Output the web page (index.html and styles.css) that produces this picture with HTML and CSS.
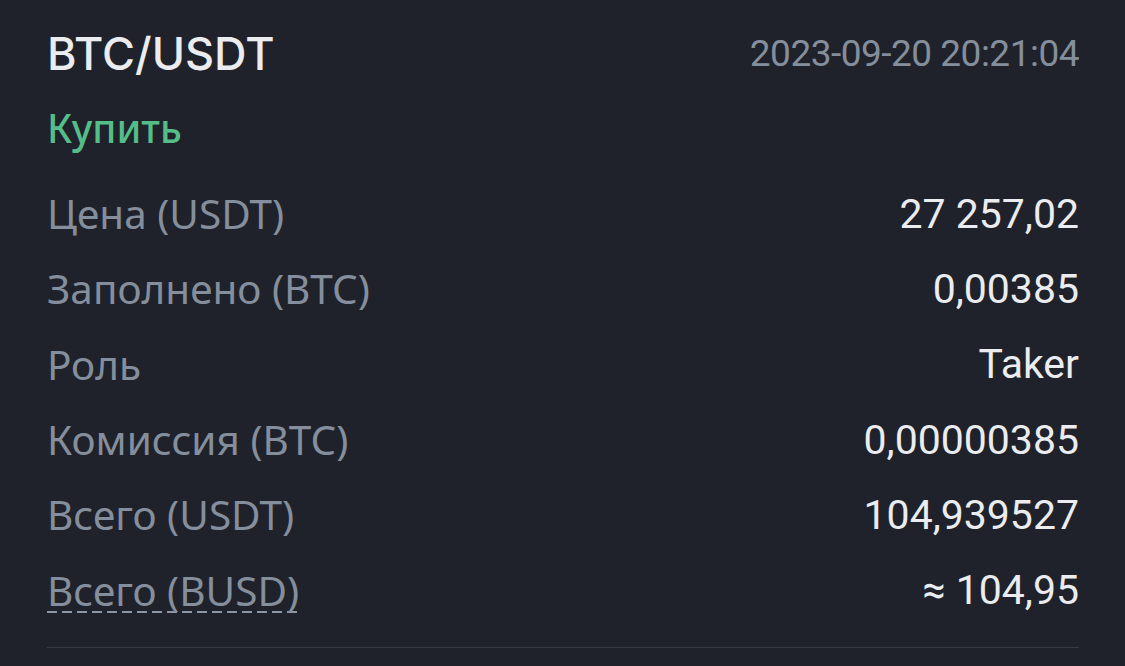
FILE: index.html
```html
<!DOCTYPE html>
<html>
<head>
    <title>BTC/USDT</title>
    <link rel="stylesheet" href="styles.css">
</head>
<body>
    <div class="trade">
        <div class="trade-head">
            <div class="pair">BTC/USDT</div>
            <div class="time">2023-09-20 20:21:04</div>
        </div>
        <div class="side">Купить</div>

        <div class="rows">
            <div class="row">
                <span class="label">Цена (USDT)</span>
                <span class="value">27 257,02</span>
            </div>
            <div class="row">
                <span class="label">Заполнено (BTC)</span>
                <span class="value">0,00385</span>
            </div>
            <div class="row">
                <span class="label">Роль</span>
                <span class="value">Taker</span>
            </div>
            <div class="row">
                <span class="label">Комиссия (BTC)</span>
                <span class="value">0,00000385</span>
            </div>
            <div class="row">
                <span class="label">Всего (USDT)</span>
                <span class="value">104,939527</span>
            </div>
            <div class="row">
                <span class="label dashed">Всего (BUSD)</span>
                <span class="value">≈ 104,95</span>
            </div>
        </div>

        <div class="divider"></div>
    </div>
</body>
</html>
```

FILE: styles.css
```css
/* Trade detail card */
body {
    margin: 0;
    background-color: #1f222a;
    font-family: "Noto Sans", Arial, sans-serif;
    color: #eaecef;
}
.trade {
    padding: 25px 46px 0 47px;
}
.trade-head {
    display: flex;
    justify-content: space-between;
    align-items: center;
    height: 56px;
}
.pair {
    font-family: Inter, "Noto Sans", sans-serif;
    font-size: 45px;
    font-weight: 500;
    color: #eaecef;
}
.time {
    font-family: Roboto, sans-serif;
    font-size: 37px;
    letter-spacing: -0.5px;
    color: #848e9c;
}
.side {
    margin-top: 19px;
    height: 56px;
    line-height: 56px;
    font-size: 39px;
    font-weight: 500;
    color: #55bd88;
}
.rows {
    margin-top: 20px;
}
.row {
    display: flex;
    justify-content: space-between;
    align-items: center;
    height: 75.3px;
}
.label {
    font-size: 40.5px;
    color: #848e9c;
}
/* dashed hint underline */
.dashed {
    background-image: repeating-linear-gradient(90deg, #8c95a3 0 10px, transparent 10px 15px);
    background-size: 100% 2px;
    background-repeat: no-repeat;
    background-position: 0 calc(100% - 5px);
}
.value {
    font-family: Roboto, sans-serif;
    font-size: 41px;
    color: #eaecef;
}
.divider {
    margin-top: 19px;
    height: 1px;
    background-color: #363a45;
}
```
